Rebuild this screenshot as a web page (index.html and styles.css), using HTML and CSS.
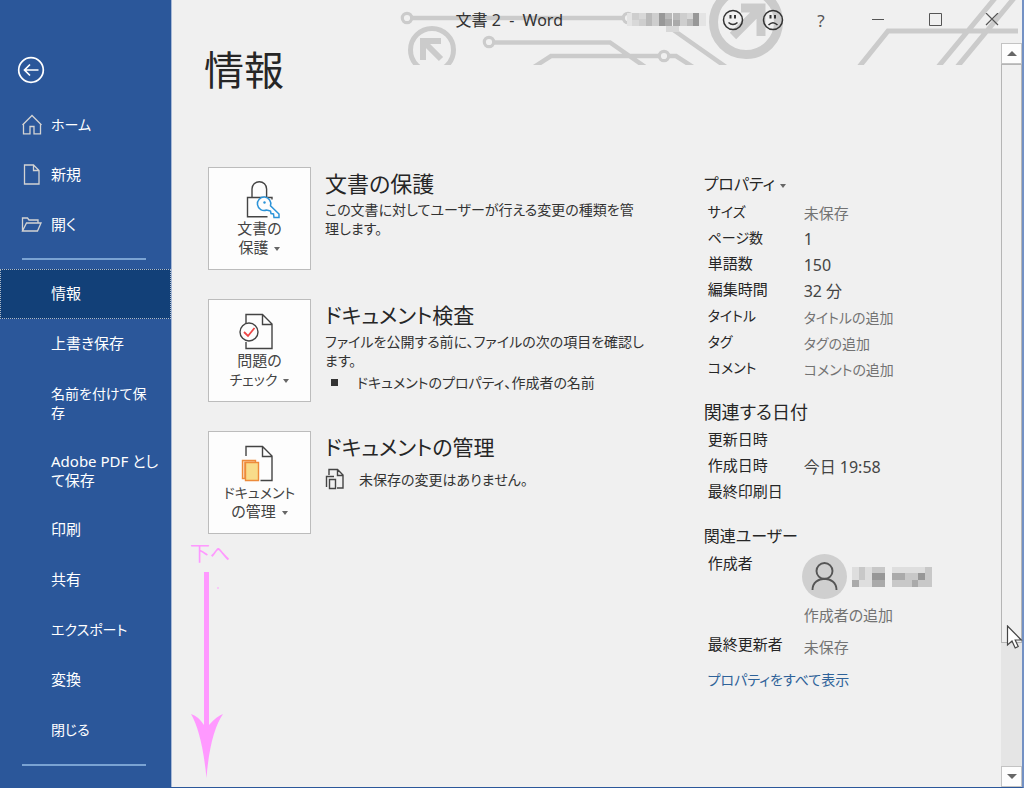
FILE: index.html
```html
<!DOCTYPE html>
<html lang="ja">
<head>
<meta charset="utf-8">
<meta name="viewport" content="width=device-width, initial-scale=1">
<title>文書 2 - Word</title>
<link rel="stylesheet" href="styles.css">
</head>
<body>
<div class="app">
  <nav class="nav" aria-label="ファイル">
    <button class="back" type="button" aria-label="戻る">
      <svg width="28" height="28" viewBox="0 0 28 28" fill="none" stroke="#fff" stroke-width="1.7"><circle cx="14" cy="14" r="12.3"/><path d="M21.5 14H7.5M13 8.5L7.5 14l5.5 5.500"/></svg>
    </button>
    <a class="item kana" href="#home"><svg class="item-icon" width="22" height="22" viewBox="0 0 22 22" fill="none" stroke="#d3d3d3" stroke-width="1.3"><path d="M1.500 11L11 1.500l9.500 9.500M2.500 10v9.800h6.500v-7.300h4v7.300h6.500V10"/></svg>ホーム</a>
    <a class="item" href="#new"><svg class="item-icon" width="22" height="22" viewBox="0 0 22 22" fill="none" stroke="#d3d3d3" stroke-width="1.3"><path d="M3.500 1h9l5.500 5.500v13.500h-14.500zM12.500 1v5.500h5.500"/></svg>新規</a>
    <a class="item" href="#open"><svg class="item-icon" width="22" height="22" viewBox="0 0 22 22" fill="none" stroke="#d3d3d3" stroke-width="1.3"><path d="M1.500 17v-13h5l1.500 2h9v3M1.500 17l4-8h14.500l-3.500 8z"/></svg>開く</a>
    <hr class="rule">
    <a class="item selected" href="#info" aria-current="page">情報</a>
    <a class="item" href="#save">上書き保存</a>
    <a class="item tall kana" href="#saveas">名前を付けて保<br>存</a>
    <a class="item tall" href="#pdf">Adobe PDF とし<br>て保存</a>
    <a class="item" href="#print">印刷</a>
    <a class="item" href="#share">共有</a>
    <a class="item kana" href="#export">エクスポート</a>
    <a class="item" href="#convert">変換</a>
    <a class="item kana" href="#close">閉じる</a>
    <hr class="rule last">
  </nav>

  <div class="pane">
    <svg class="circuit" width="634" height="65" viewBox="390 0 634 65" fill="none" stroke="#cbcbcb" stroke-width="4.500" aria-hidden="true">
      <circle cx="407" cy="18" r="4.700" stroke-width="3.200"/><path d="M412 18H623"/><circle cx="628" cy="18" r="4.700" stroke-width="3.200"/>
      <circle cx="432" cy="50" r="21.500" stroke-width="5"/><path d="M423 60V41h18M423 41l18 18" stroke-width="6"/>
      <circle cx="489" cy="42" r="4.700" stroke-width="3.200"/><path d="M494 42.500h116l36 25M534 67l17-11h108"/>
      <circle cx="664" cy="56" r="4.700" stroke-width="3.200"/><path d="M669 56h7l17 11M672 29l54 38"/>
      <circle cx="746" cy="22" r="32.500" stroke-width="9"/><path d="M741 8h20v28M761 8l-28 28" stroke-width="9"/>
      <path d="M1018 31H888l-29 36M996-3l-58 70M1015-3l-58 70" stroke-width="5"/>
    </svg>
    <header class="titlebar">
      <span class="doc-title">文書 2&nbsp; -&nbsp; Word</span>
      <svg class="user" width="80" height="24" viewBox="0 0 80 24" shape-rendering="crispEdges" aria-hidden="true">
        <path fill="#e4e4e4" d="M0 5h5v13H0zM72 5h7v13h-7z"/><path fill="#cecece" d="M5 5h7v7H5zM12 11h7v7h-7zM25 5h7v13h-7zM53 5h7v13h-7z"/><path fill="#bababa" d="M19 5h6v13h-6zM38 5h7v6h-7zM46 5h7v7h-7zM60 11h6v7h-6z"/><path fill="#d8d8d8" d="M5 12h7v6H5zM12 5h7v6h-7zM39 18h13v6H39zM60 5h6v6h-6z"/><path fill="#989898" d="M32 5h6v13h-6zM66 5h6v13h-6z"/><path fill="#aaa" d="M38 11h7v7h-7zM46 12h7v6h-7z"/>
      </svg>
      <button class="tool" type="button" aria-label="満足"><svg width="22" height="22" viewBox="0 0 22 22" fill="none" stroke="#333" stroke-width="1.500"><circle cx="11" cy="11" r="9.500"/><path d="M6.500 13.500q4.500 4 9 0"/><path d="M8.500 6v3.500M13 6v3.500" stroke-width="2"/></svg></button>
      <button class="tool" type="button" aria-label="不満"><svg width="22" height="22" viewBox="0 0 22 22" fill="none" stroke="#333" stroke-width="1.500"><circle cx="11" cy="11" r="9.500"/><path d="M6.500 16q4.500-4.500 9 0"/><path d="M8.500 6v3.500M13 6v3.500" stroke-width="2"/></svg></button>
      <button class="tool help" type="button" aria-label="ヘルプ">?</button>
      <button class="tool win" type="button" aria-label="最小化"><svg width="14" height="14" viewBox="0 0 14 14" stroke="#555"><path d="M1 6.500h12"/></svg></button>
      <button class="tool win" type="button" aria-label="最大化"><svg width="14" height="14" viewBox="0 0 14 14" fill="none" stroke="#555"><path d="M1.500 .5h12v12h-12z"/></svg></button>
      <button class="tool win" type="button" aria-label="閉じる"><svg width="14" height="14" viewBox="0 0 14 14" fill="none" stroke="#555" stroke-width="1.200"><path d="M1 0l12 12M13 0L1 12"/></svg></button>
    </header>

    <div class="body">
      <main class="content">
        <h1>情報</h1>
        <div class="columns">
          <div class="cards">
            <section class="card">
              <button class="tile" type="button">
                <svg width="44" height="40" viewBox="0 0 44 40" fill="none" stroke="#444" stroke-width="1.400"><path d="M14 18V10a7.300 7.300 0 0 1 14.600 0v8M34 20.500v-2H9.500v19.200h20"/><g stroke="#2b93d8" stroke-width="1.500"><path fill="#fdfdfd" d="M30.500 31.500l2 .5.500 2.500 2.500.5.500 3.500h5v-3.500l-8.500-8.300a6.700 6.700 0 1 0-4 4.300z"/><circle cx="26.500" cy="23.500" r="1.200" fill="#2b93d8" stroke="none"/></g></svg>
                <span>文書の<br>保護 <i class="caret"></i></span>
              </button>
              <div class="text"><h2>文書の保護</h2><p>この文書に対してユーザーが行える変更の種類を管<br>理します。</p></div>
            </section>
            <section class="card">
              <button class="tile" type="button">
                <svg width="44" height="40" viewBox="0 0 44 40" fill="none" stroke="#444" stroke-width="1.400"><path d="M8 12V3.500h16.500l9.500 9.500v24.500H8V31M24.500 3.500V13.500H34"/><circle cx="11" cy="21" r="9" fill="#fdfdfd"/><path stroke="#ee4646" stroke-width="1.800" d="M6 21l4 4 6.500-8"/></svg>
                <span>問題の<br><span class="kana">チェック</span> <i class="caret"></i></span>
              </button>
              <div class="text"><h2 class="kana">ドキュメント検査</h2><p>ファイルを公開する前に、ファイルの次の項目を確認し<br>ます。</p><ul><li>ドキュメントのプロパティ、作成者の名前</li></ul></div>
            </section>
            <section class="card">
              <button class="tile" type="button">
                <svg width="44" height="40" viewBox="0 0 44 40" fill="none" stroke="#444" stroke-width="1.400"><path d="M8 13V3.500h16.500l9.500 9.500v24.500H22.500M24.500 3.500V13.500H34"/><path stroke="#ed8b3b" fill="#fae0c8" d="M17.500 17.500h-13v18H7V19.500h10.500z"/><path stroke="#ed8b3b" fill="#f8dc8a" d="M7.500 19.500h13v18h-13z"/></svg>
                <span><span class="kana">ドキュメント</span><br>の管理 <i class="caret"></i></span>
              </button>
              <div class="text"><h2 class="kana">ドキュメントの管理</h2><p class="status"><svg width="20" height="22" viewBox="0 0 20 22" fill="none" stroke="#444" stroke-width="1.400"><path d="M4 7V1.500h8.500l5.500 5.500v13H12M12.500 1.500V7.500h5.500M1.500 19V8.500H9M4.500 11.500h6v9h-6z"/></svg>未保存の変更はありません。</p></div>
            </section>
          </div>

          <aside class="props">
            <h3 class="kana"><button class="prop-menu" type="button">プロパティ<i class="caret"></i></button></h3>
            <table>
              <tr><th scope="row" class="kana">サイズ</th><td>未保存</td></tr>
              <tr><th scope="row" class="kana">ページ数</th><td class="dark">1</td></tr>
              <tr><th scope="row">単語数</th><td class="dark">150</td></tr>
              <tr><th scope="row">編集時間</th><td class="dark">32 分</td></tr>
              <tr><th scope="row" class="kana">タイトル</th><td class="kana">タイトルの追加</td></tr>
              <tr><th scope="row" class="kana">タグ</th><td class="kana">タグの追加</td></tr>
              <tr><th scope="row" class="kana">コメント</th><td class="kana">コメントの追加</td></tr>
            </table>
            <h3>関連する日付</h3>
            <table>
              <tr><th scope="row">更新日時</th><td></td></tr>
              <tr><th scope="row">作成日時</th><td class="dark">今日 19:58</td></tr>
              <tr><th scope="row">最終印刷日</th><td></td></tr>
            </table>
            <h3 class="kana">関連ユーザー</h3>
            <table class="people">
              <tr><th scope="row">作成者</th><td>
                <div class="person">
                  <svg width="45" height="45" viewBox="0 0 45 45" fill="none" stroke="#555" stroke-width="1.900"><circle cx="22.500" cy="22.500" r="22.500" fill="#cfcfcf" stroke="none"/><circle cx="22.500" cy="17" r="8"/><path d="M10.500 36c0-15 24-15 24 0"/></svg>
                  <svg width="80" height="20" viewBox="0 0 80 20" shape-rendering="crispEdges" aria-hidden="true"><path fill="#dedede" d="M0 0h27v20H0zM40 0h40v20H40z"/><path fill="#c8c8c8" d="M7 0h6v13H7zM20 0h13v20H20zM40 13h40v7H40zM53 6h27v7H53zM73 0h7v20h-7z"/><path fill="#aaa" d="M0 13h7v7H0zM40 6h13v7H40zM60 13h6v7h-6zM20 13h13v7H20z"/><path fill="#979797" d="M20 6h13v7H20zM66 6h7v7h-7z"/></svg>
                </div>作成者の追加</td></tr>
              <tr><th scope="row">最終更新者</th><td>未保存</td></tr>
            </table>
            <a class="all kana" href="#all">プロパティをすべて表示</a>
          </aside>
        </div>
      </main>
      <div class="scroll">
        <button class="step" type="button" aria-label="上へスクロール"><i class="up"></i></button>
        <div class="track"><div class="thumb"></div></div>
        <button class="step" type="button" aria-label="下へスクロール"><i class="down"></i></button>
      </div>
    </div>

    <div class="note">
      <span>下へ</span>
      <svg width="34" height="208" viewBox="0 0 34 208" fill="#ff99ff"><path d="M14 1h5v153q8-9 14-11Q20 162 16.500 207 12 162 1 143q7 2 13 11z"/><circle cx="28" cy="17" r="1" opacity=".6"/></svg>
    </div>
    <svg class="pointer" width="17" height="25" viewBox="0 0 17 25" fill="#fff" stroke="#444" stroke-width="1.200"><path d="M1.500 1v19l4.500-4 3.200 7 3-1.500-3-6.500h6z"/></svg>
  </div>
</div>
</body>
</html>
```

FILE: styles.css
```css
* { box-sizing: border-box; }
body {
  margin: 0;
  font-family: "Noto Sans", "Noto Sans CJK JP", sans-serif;
  font-size: 15px;
  line-height: 19px;
  font-feature-settings: "palt";
  color: #333;
  background: #f0f0f0;
}
button { font: inherit; font-feature-settings: inherit; color: inherit; background: none; border: 0; padding: 0; }
h1, h2, h3, p, ul { margin: 0; padding: 0; font-weight: 400; }
svg { flex: none; }
.kana, p, li { font-size: 14px; }

.app { display: flex; min-height: 100vh; border-right: 2px solid #7391c4; border-bottom: 1px solid #2b579a; }

.nav { flex: none; width: 172px; padding-top: 56px; background: #2b579a; border-right: 1px solid #a8b9d6; }
.back { display: block; width: 28px; height: 28px; margin: 0 0 16px 17px; }
.back svg { display: block; }
.item { position: relative; display: block; padding: 15px 8px 16px 51px; color: #fff; text-decoration: none; white-space: nowrap; }
.item-icon { position: absolute; left: 21px; top: 14px; }
.tall { padding-bottom: 15px; }
.selected { background: #124078; outline: 1px dotted #aeb9c8; outline-offset: -1px; }
.rule { height: 2px; margin: 8px 25px 9px 22px; border: 0; background: #7aa3d3; }
.last { margin: 9px 25px 20px 22px; }

.pane { position: relative; flex: 1; min-width: 0; display: flex; flex-direction: column; }
.circuit { position: absolute; top: 0; right: -2px; }
.titlebar { position: relative; display: flex; justify-content: flex-end; align-items: center; height: 40px; padding-right: 2px; }
.doc-title { margin-right: 64px; font-size: 16px; white-space: nowrap; }
.user { margin-right: 6px; }
.tool { display: flex; align-items: center; justify-content: center; width: 40px; height: 38px; }
.help { width: 56px; font-size: 17px; color: #555; }
.win { width: 57px; }

.body { flex: 1; display: flex; }
.content { flex: 1; padding: 0 0 24px 36px; }
h1 { margin-left: -4px; font-size: 40px; line-height: 60px; color: #262626; }
.columns { display: grid; grid-template-columns: 5fr 3fr; margin-top: 67px; }
.cards { display: flex; flex-direction: column; gap: 29px; }
.card { display: flex; gap: 14px; }
.tile { flex: none; display: flex; flex-direction: column; align-items: center; width: 103px; height: 103px; padding-top: 11px; background: #fdfdfd; border: 1px solid #bcbcbc; color: #444; }
.caret { display: inline-block; margin-left: 2px; border: 3px solid transparent; border-top: 4px solid #666; border-bottom: 0; vertical-align: middle; }
.text { padding-top: 1px; white-space: nowrap; }
h2 { margin-bottom: 2px; font-size: 22px; line-height: 30px; color: #262626; }
h2.kana { font-size: 21px; }
ul { list-style: none; }
li { display: flex; align-items: center; gap: 19px; padding: 3px 0 0 6px; }
li::before { content: ""; width: 7px; height: 7px; background: #333; }
.status { display: flex; align-items: center; gap: 14px; padding-top: 4px; }

h3 { margin-top: 16px; font-size: 18px; line-height: 30px; }
h3.kana { font-size: 16px; }
.props { padding-top: 2px; white-space: nowrap; color: #262626; }
.props h3:first-child { margin-top: 0; }
.prop-menu .caret { margin-left: 5px; }
table { margin-left: 4px; border-collapse: collapse; }
th { width: 96px; height: 26px; padding: 3px 0 4px; font-weight: 400; text-align: left; vertical-align: top; }
td { padding: 5px 0 2px; color: #737373; vertical-align: top; }
td.dark { color: #444; font-size: 16px; }
.people tr:last-child th { padding-top: 8px; }
.people tr:last-child td { padding-top: 11px; }
.person { display: flex; align-items: center; gap: 5px; margin: -2px 0 7px -2px; }
.all { display: block; margin: 11px 0 0 4px; color: #2e6299; text-decoration: none; }

.scroll { flex: none; display: flex; flex-direction: column; width: 21px; padding-top: 3px; }
.step { display: flex; align-items: center; justify-content: center; height: 21px; background: #fdfdfd; border: 1px solid #c3c3c3; }
.up, .down { border: 5px solid transparent; }
.up { border-top: 0; border-bottom: 5px solid #666; }
.down { border-bottom: 0; border-top: 5px solid #666; }
.track { flex: 1; background: #e5e5e5; }
.thumb { height: 82.5%; background: #f0f0f0; border: 1px solid #b5b5b5; }

.note { position: absolute; left: 18px; top: 542px; color: #ff99ff; font-size: 20px; line-height: 24px; }
.note span, .note svg { display: block; }
.note svg { margin-top: 5px; }
.pointer { position: absolute; right: -1px; top: 625px; }
```
